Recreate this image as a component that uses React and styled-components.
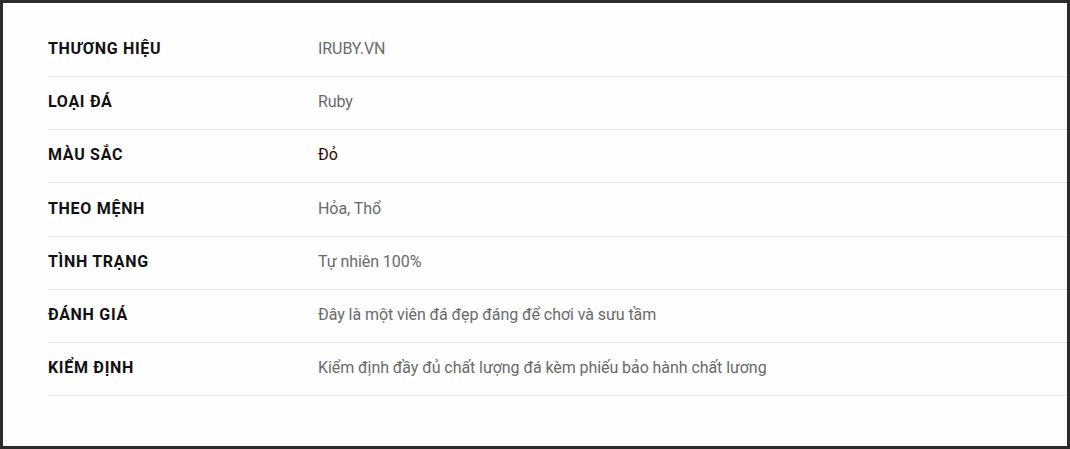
import React from "react";
import styled, { createGlobalStyle } from "styled-components";

const Global = createGlobalStyle`
  html, body { margin: 0; padding: 0; background: #2b2b2b; }
  body { font-family: Roboto, "Noto Sans", Arial, sans-serif; }
  * { box-sizing: border-box; }
`;

const Frame = styled.div`
  width: 1070px;
  height: 449px;
  border: 3px solid #2b2b2b;
  background: #fefefe;
  padding: 21px 0 0 45px;
`;

const Table = styled.div`
  display: flex;
  flex-direction: column;
`;

const Row = styled.div`
  display: grid;
  grid-template-columns: 270px 1fr;
  align-items: center;
  height: 53.16px;
  padding-bottom: 3px;
  border-bottom: 1px solid #e8e8e8;
`;

const Label = styled.div`
  font-family: Roboto, sans-serif;
  font-weight: 700;
  font-size: 16px;
  letter-spacing: 0.7px;
  color: #111111;
  text-transform: uppercase;
`;

const Value = styled.div`
  font-family: Roboto, sans-serif;
  font-weight: 400;
  font-size: 16px;
  letter-spacing: -0.07px;
  color: ${(p) => (p.$dark ? "#330202" : "#6a6a6a")};
`;

const rows = [
  ["THƯƠNG HIỆU", "IRUBY.VN"],
  ["LOẠI ĐÁ", "Ruby"],
  ["MÀU SẮC", "Đỏ", true],
  ["THEO MỆNH", "Hỏa, Thổ"],
  ["TÌNH TRẠNG", "Tự nhiên 100%"],
  ["ĐÁNH GIÁ", "Đây là một viên đá đẹp đáng để chơi và sưu tầm"],
  ["KIỂM ĐỊNH", "Kiểm định đầy đủ chất lượng đá kèm phiếu bảo hành chất lương"],
];

export default function App() {
  return (
    <>
      <Global />
      <Frame>
        <Table>
          {rows.map(([l, v, d]) => (
            <Row key={l}>
              <Label>{l}</Label>
              <Value $dark={d}>{v}</Value>
            </Row>
          ))}
        </Table>
      </Frame>
    </>
  );
}
